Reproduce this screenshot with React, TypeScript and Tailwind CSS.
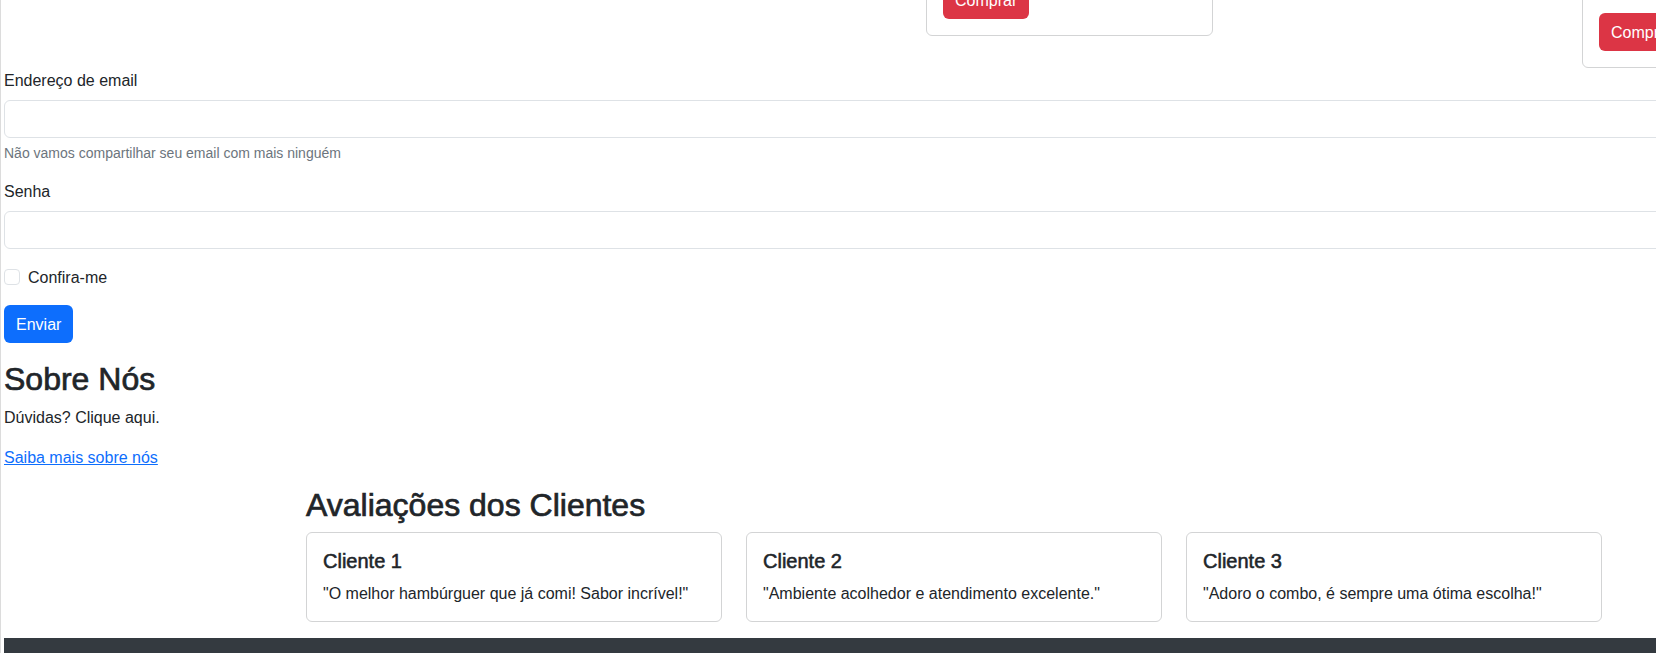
import React from "react";

function ProductCard({ spacer, ml }: { spacer: string; ml: string }) {
  return (
    <div className={`${ml} w-[287px] shrink-0 rounded-[6px] border border-[#d3d4d5] p-4 flex flex-col`}>
      <div className={spacer} />
      <button className="self-start h-[38px] px-3 pt-[2px] rounded-[6px] bg-[#dc3545] text-white text-base leading-6">
        Comprar
      </button>
    </div>
  );
}

function ReviewCard({ name, text }: { name: string; text: string }) {
  return (
    <div className="w-[416px] rounded-[6px] border border-[#d3d4d5] p-4">
      <h5 className="text-[20px] pt-[1px] leading-[23px] font-medium [-webkit-text-stroke:0.55px_#212529] mb-2">{name}</h5>
      <p className="text-base pt-[2px] leading-[22px]">{text}</p>
    </div>
  );
}

export default function App() {
  return (
    <div
      className="w-[1656px] h-[653px] overflow-hidden bg-white text-[#212529] flex"
      style={{ fontFamily: '"Liberation Sans", Arial, sans-serif' }}
    >
      <div className="w-[1px] shrink-0 bg-[#dcdcdc]" />
      <div className="w-[3px] shrink-0" />
      <div className="w-[1900px] shrink-0 flex flex-col">
        {/* product row (scrolled) */}
        <div className="-mt-[100px] flex items-start">
          <ProductCard ml="ml-[922px]" spacer="h-[64px]" />
          <ProductCard ml="ml-[369px]" spacer="h-[96px]" />
        </div>

        {/* form */}
        <form className="flex flex-col">
          <label className="text-base pt-[2px] leading-[22px] mb-2">Endereço de email</label>
          <div className="h-[38px] rounded-[6px] border border-[#dee2e6] bg-white" />
          <div className="mt-1 text-sm pt-[1px] leading-[20px] text-[#6c757d] mb-4">
            Não vamos compartilhar seu email com mais ninguém
          </div>
          <label className="text-base pt-[2px] leading-[22px] mb-2">Senha</label>
          <div className="h-[38px] rounded-[6px] border border-[#dee2e6] bg-white mb-4" />
          <div className="flex items-start h-6 mb-4">
            <span className="mt-1 w-4 h-4 rounded-[4px] border border-[#dee2e6] bg-white" />
            <span className="ml-2 text-base pt-[2px] leading-[22px]">Confira-me</span>
          </div>
          <button
            type="button"
            className="self-start h-[38px] px-3 pt-[2px] rounded-[6px] bg-[#0d6efd] text-white text-base leading-6"
          >
            Enviar
          </button>
        </form>

        {/* about */}
        <section className="mt-4">
          <h2 className="text-[32px] pt-[2px] leading-[36.4px] font-medium [-webkit-text-stroke:0.7px_#212529] mb-2">Sobre Nós</h2>
          <p className="text-base pt-[2px] leading-[22px] mb-4">Dúvidas? Clique aqui.</p>
          <p className="text-base pt-[2px] leading-[22px] mb-4">
            <a href="#" className="text-[#0d6efd] underline">
              Saiba mais sobre nós
            </a>
          </p>
        </section>

        {/* reviews */}
        <section className="ml-[302px] w-[1296px] mb-4">
          <h2 className="text-[32px] pt-[2px] leading-[36.4px] font-medium [-webkit-text-stroke:0.7px_#212529] mb-2">
            Avaliações dos Clientes
          </h2>
          <div className="flex gap-6">
            <ReviewCard name="Cliente 1" text={'"O melhor hambúrguer que já comi! Sabor incrível!"'} />
            <ReviewCard name="Cliente 2" text={'"Ambiente acolhedor e atendimento excelente."'} />
            <ReviewCard name="Cliente 3" text={'"Adoro o combo, é sempre uma ótima escolha!"'} />
          </div>
        </section>

        <footer className="h-[120px] bg-[#343a40]" />
      </div>
    </div>
  );
}
